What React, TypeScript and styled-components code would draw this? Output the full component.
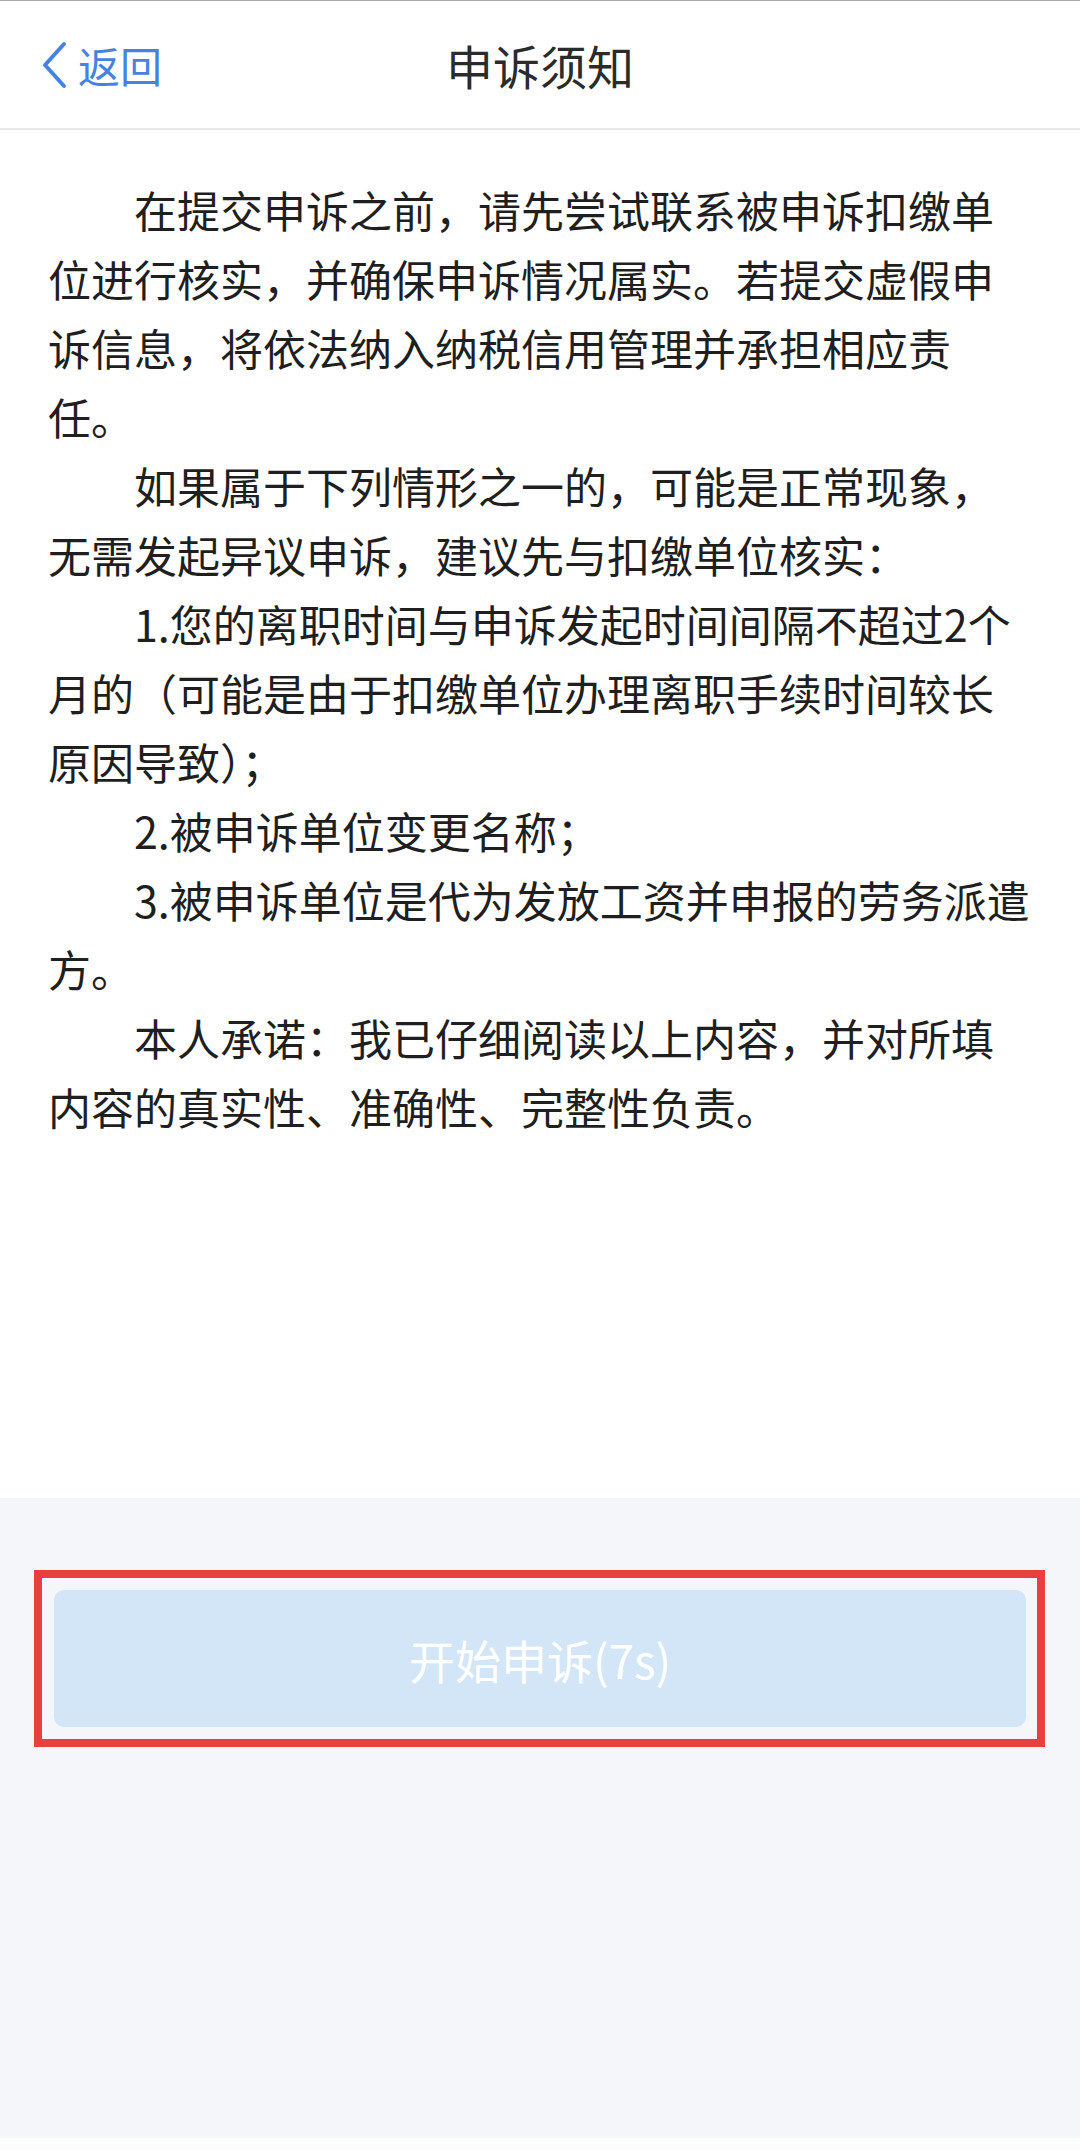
import React from "react";
import styled, { createGlobalStyle } from "styled-components";

const GlobalStyle = createGlobalStyle`
  html, body {
    margin: 0;
    padding: 0;
    background: #ffffff;
  }
  body {
    font-family: "Noto Sans CJK SC", "Noto Sans", "Liberation Sans", sans-serif;
  }
`;

const Page = styled.div`
  display: flex;
  flex-direction: column;
  width: 1080px;
  min-height: 2150px;
  border-top: 1px solid #a8a8a8;
  box-sizing: border-box;
`;

const Header = styled.header`
  position: relative;
  display: flex;
  align-items: center;
  justify-content: center;
  height: 127px;
  background: #ffffff;
  border-bottom: 2px solid #e9e9e9;
  flex-shrink: 0;
`;

const BackButton = styled.button`
  position: absolute;
  left: 40px;
  top: 50%;
  transform: translateY(-50%);
  display: flex;
  align-items: center;
  gap: 10px;
  padding: 0;
  border: none;
  background: none;
  color: #4683e1;
  font-family: inherit;
  font-size: 42px;
  line-height: 1;
`;

const Title = styled.h1`
  margin: 0;
  font-size: 47px;
  font-weight: 400;
  color: #2b2b2b;
  letter-spacing: 0;
`;

const Content = styled.main`
  height: 1368px;
  box-sizing: border-box;
  padding: 45px 46px 0 48px;
  background: #ffffff;
  flex-shrink: 0;
`;

const Para = styled.p`
  margin: 0;
  font-size: 43px;
  line-height: 69px;
  color: #1f1f1f;
  text-indent: 2em;
`;

const Footer = styled.footer`
  flex: 1;
  display: flex;
  flex-direction: column;
  background: #f5f6fa;
  padding: 72px 35px 0 34px;
`;

const Highlight = styled.div`
  border: 8px solid #e8403f;
  padding: 12px 11px 12px 12px;
`;

const StartButton = styled.button<{ $disabled?: boolean }>`
  display: flex;
  align-items: center;
  justify-content: center;
  width: 100%;
  height: 137px;
  border: none;
  border-radius: 10px;
  background: ${p => (p.$disabled ? "#d2e6f7" : "#3a86e8")};
  color: #ffffff;
  font-family: inherit;
  font-size: 46px;
  font-weight: 400;
`;

const Spacer = styled.div`
  flex: 1;
`;

const HomeStrip = styled.div`
  height: 12px;
  background: #fcfcfd;
  margin: 0 -35px 0 -34px;
`;

const Chevron = () => (
  <svg width="28" height="48" viewBox="0 0 28 48" fill="none">
    <path
      d="M24 3 L5 24 L24 45"
      stroke="#4683e1"
      strokeWidth="4"
      strokeLinecap="round"
      strokeLinejoin="round"
    />
  </svg>
);

const paragraphs = [
  "在提交申诉之前，请先尝试联系被申诉扣缴单位进行核实，并确保申诉情况属实。若提交虚假申诉信息，将依法纳入纳税信用管理并承担相应责任。",
  "如果属于下列情形之一的，可能是正常现象，无需发起异议申诉，建议先与扣缴单位核实：",
  "1.您的离职时间与申诉发起时间间隔不超过2个月的（可能是由于扣缴单位办理离职手续时间较长原因导致）；",
  "2.被申诉单位变更名称；",
  "3.被申诉单位是代为发放工资并申报的劳务派遣方。",
  "本人承诺：我已仔细阅读以上内容，并对所填内容的真实性、准确性、完整性负责。",
];

const App: React.FC = () => {
  const seconds = 7;
  return (
    <Page>
      <GlobalStyle />
      <Header>
        <BackButton>
          <Chevron />
          返回
        </BackButton>
        <Title>申诉须知</Title>
      </Header>
      <Content>
        {paragraphs.map(text => (
          <Para key={text}>{text}</Para>
        ))}
      </Content>
      <Footer>
        <Highlight>
          <StartButton $disabled>开始申诉({seconds}s)</StartButton>
        </Highlight>
        <Spacer />
        <HomeStrip />
      </Footer>
    </Page>
  );
};

export default App;
